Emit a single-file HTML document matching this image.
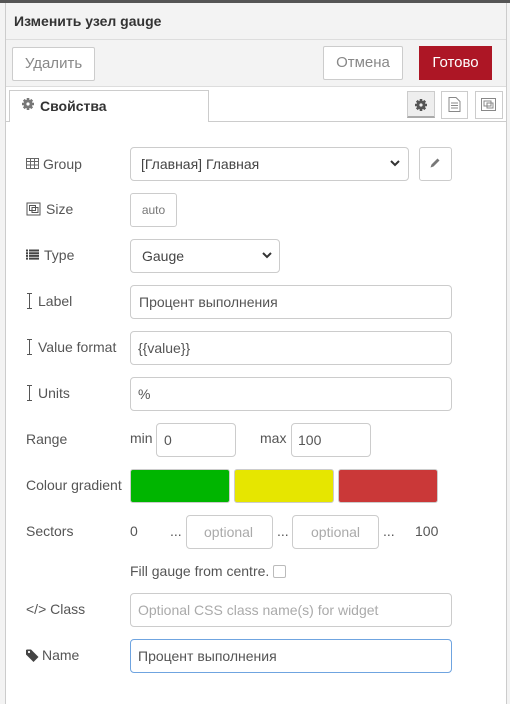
<!DOCTYPE html>
<html><head><meta charset="utf-8"><style>
*{box-sizing:border-box;margin:0;padding:0}
body{width:510px;height:704px;overflow:hidden;background:#f3f3f3;font-family:"Liberation Sans","Noto Sans CJK SC",sans-serif;font-size:14px;color:#555;position:relative}
.a{position:absolute}
.topbar{left:0;top:0;width:510px;height:3px;background:#555}
.dlg{left:5px;top:3px;width:502px;height:701px;border-left:1px solid #ccc;border-right:1px solid #ccc;background:#fff}
.hdr{left:6px;top:3px;width:500px;height:37px;background:#f3f3f3;border-bottom:1px solid #ddd;font-weight:bold;color:#333;padding:10px 0 0 8px;font-size:14px}
.tb{left:6px;top:40px;width:500px;height:47px;background:#f3f3f3;border-bottom:1px solid #ddd}
.btn{border:1px solid #ccc;background:#fff;color:#888;text-align:center;border-radius:2px;font-size:14px}
.inp{border:1px solid #ccc;border-radius:4px;background:#fff;color:#555;padding-left:8px;font-size:14px;line-height:32px;height:34px}
.lbl{left:26px;color:#555;font-size:14px}
.ph{color:#aaa}
</style></head><body>
<div class="a topbar"></div>
<div class="a dlg"></div>
<div class="a hdr">Изменить узел gauge</div>
<div class="a tb"></div>
<div class="a btn" style="left:12px;top:47px;width:83px;height:34px;line-height:32px;font-size:15px">Удалить</div>
<div class="a btn" style="left:323px;top:46px;width:80px;height:34px;line-height:32px;font-size:15px">Отмена</div>
<div class="a" style="left:419px;top:46px;width:73px;height:34px;line-height:33px;background:#ad1625;color:#fff;text-align:center;font-size:15px">Готово</div>
<div class="a" style="left:6px;top:121px;width:500px;height:1px;background:#ccc"></div>
<div class="a" style="left:9px;top:90px;width:200px;height:32px;border:1px solid #ccc;border-bottom:none;background:#fff;font-weight:bold;color:#333;padding:7px 0 0 30px">Свойства</div>
<svg class="a" style="left:22px;top:98px" width="12" height="12" viewBox="0 0 12 12"><circle cx="6" cy="6" r="4.5" fill="#777"/><g stroke="#777" stroke-width="2.6"><path d="M6 0v12M0 6h12M1.8 1.8l8.4 8.4M10.2 1.8l-8.4 8.4"/></g><circle cx="6" cy="6" r="1.6" fill="#fff"/></svg>
<div class="a" style="left:407px;top:91px;width:28px;height:27px;background:#eee;border:1px solid #ccc;border-bottom:2px solid #aaa"></div>
<svg class="a" style="left:415px;top:99px" width="12" height="12" viewBox="0 0 12 12"><circle cx="6" cy="6" r="4.5" fill="#555"/><g stroke="#555" stroke-width="2.6"><path d="M6 0v12M0 6h12M1.8 1.8l8.4 8.4M10.2 1.8l-8.4 8.4"/></g><circle cx="6" cy="6" r="1.6" fill="#eee"/></svg>
<div class="a" style="left:441px;top:91px;width:27px;height:28px;border:1px solid #ccc;background:#fff"></div>
<svg class="a" style="left:448px;top:97px" width="13" height="15" viewBox="0 0 13 15"><path d="M1 .5h7l4 4v10H1z" fill="none" stroke="#888"/><path d="M3 6h7M3 8.5h7M3 11h7" stroke="#888"/></svg>
<div class="a" style="left:475px;top:91px;width:28px;height:28px;border:1px solid #ccc;background:#fff"></div>
<svg class="a" style="left:480px;top:97px" width="17" height="15" viewBox="0 0 17 15"><rect x="1.5" y="1.5" width="14" height="12" fill="none" stroke="#888"/><rect x="4" y="4" width="7" height="5" fill="none" stroke="#888"/><rect x="7" y="6" width="6" height="5" fill="none" stroke="#888"/></svg>

<svg class="a" style="left:26px;top:158px" width="13" height="11" viewBox="0 0 13 11"><rect x=".5" y=".5" width="12" height="10" fill="none" stroke="#666"/><path d="M.5 3.5h12M.5 7h12M4.5.5v10M8.5.5v10" stroke="#666"/></svg>
<div class="a lbl" style="left:43px;top:156px">Group</div>
<div class="a inp" style="left:130px;top:147px;width:279px;color:#444;padding-left:10px">[Главная] Главная</div>
<svg class="a" style="left:390px;top:160px" width="10" height="7" viewBox="0 0 10 7"><path d="M1 1l4 4 4-4" fill="none" stroke="#333" stroke-width="2"/></svg>
<div class="a btn" style="left:419px;top:147px;width:33px;height:34px;border-radius:3px"></div>
<svg class="a" style="left:429px;top:157px" width="12" height="12" viewBox="0 0 12 12"><path d="M1.5 10.5l1-3 6-6 2 2-6 6z" fill="#777"/></svg>
<svg class="a" style="left:26px;top:202px" width="15" height="14" viewBox="0 0 15 14"><rect x="1" y="1" width="13" height="12" fill="none" stroke="#555"/><rect x="3.5" y="3.5" width="6" height="5" fill="none" stroke="#555"/><rect x="6" y="5.5" width="6" height="5" fill="none" stroke="#555"/></svg>
<div class="a lbl" style="left:46px;top:201px">Size</div>
<div class="a btn" style="left:130px;top:193px;width:47px;height:34px;line-height:32px;font-size:12px;color:#777;border-radius:3px">auto</div>
<svg class="a" style="left:26px;top:249px" width="13" height="11" viewBox="0 0 13 11"><path d="M0 1.5h2M3 1.5h10M0 4.2h2M3 4.2h10M0 6.9h2M3 6.9h10M0 9.6h2M3 9.6h10" stroke="#444" stroke-width="2"/></svg>
<div class="a lbl" style="left:44px;top:247px">Type</div>
<div class="a inp" style="left:130px;top:239px;width:150px;color:#444;padding-left:11px">Gauge</div>
<svg class="a" style="left:262px;top:252px" width="10" height="7" viewBox="0 0 10 7"><path d="M1 1l4 4 4-4" fill="none" stroke="#333" stroke-width="2"/></svg>
<svg class="a" style="left:26px;top:293px" width="7" height="16" viewBox="0 0 7 16"><path d="M1 .5h5M3.5.5v15M1 15.5h5" stroke="#555"/></svg>
<div class="a lbl" style="left:38px;top:293px">Label</div>
<div class="a inp" style="left:130px;top:285px;width:322px">Процент выполнения</div>
<svg class="a" style="left:26px;top:339px" width="7" height="16" viewBox="0 0 7 16"><path d="M1 .5h5M3.5.5v15M1 15.5h5" stroke="#555"/></svg>
<div class="a lbl" style="left:38px;top:339px">Value format</div>
<div class="a inp" style="left:130px;top:331px;width:322px;padding-left:7px">{{value}}</div>
<svg class="a" style="left:26px;top:385px" width="7" height="16" viewBox="0 0 7 16"><path d="M1 .5h5M3.5.5v15M1 15.5h5" stroke="#555"/></svg>
<div class="a lbl" style="left:38px;top:385px">Units</div>
<div class="a inp" style="left:130px;top:377px;width:322px;padding-left:7px">%</div>
<div class="a lbl" style="top:431px">Range</div>
<div class="a" style="left:130px;top:430px">min</div>
<div class="a inp" style="left:156px;top:423px;width:80px;padding-left:7px">0</div>
<div class="a" style="left:260px;top:430px">max</div>
<div class="a inp" style="left:291px;top:423px;width:80px;padding-left:6px">100</div>
<div class="a lbl" style="top:477px">Colour gradient</div>
<div class="a" style="left:130px;top:469px;width:100px;height:34px;background:#00b500;border:1px solid #ccc;border-radius:3px"></div>
<div class="a" style="left:234px;top:469px;width:100px;height:34px;background:#e6e600;border:1px solid #ccc;border-radius:3px"></div>
<div class="a" style="left:338px;top:469px;width:100px;height:34px;background:#ca3838;border:1px solid #ccc;border-radius:3px"></div>
<div class="a lbl" style="top:523px">Sectors</div>
<div class="a" style="left:130px;top:523px">0</div>
<div class="a" style="left:170px;top:523px">...</div>
<div class="a inp ph" style="left:186px;top:515px;width:87px;padding-left:17px">optional</div>
<div class="a" style="left:277px;top:523px">...</div>
<div class="a inp ph" style="left:292px;top:515px;width:87px;padding-left:18px">optional</div>
<div class="a" style="left:383px;top:523px">...</div>
<div class="a" style="left:415px;top:523px">100</div>
<div class="a" style="left:130px;top:563px">Fill gauge from centre.</div>
<div class="a" style="left:273px;top:565px;width:13px;height:13px;border:1px solid #bbb;border-radius:2px;background:#fff"></div>
<div class="a lbl" style="top:601px">&lt;/&gt; Class</div>
<div class="a inp ph" style="left:130px;top:593px;width:322px;padding-left:7px">Optional CSS class name(s) for widget</div>
<svg class="a" style="left:26px;top:649px" width="13" height="13" viewBox="0 0 13 13"><path d="M0 1v4.5l7.5 7.5 5-5L5 0.5H1z" fill="#444"/><circle cx="3" cy="3" r="1.1" fill="#fff"/></svg>
<div class="a lbl" style="left:42px;top:647px">Name</div>
<div class="a inp" style="left:130px;top:639px;width:322px;border-color:#6fa4e0;padding-left:7px">Процент выполнения</div>
</body></html>
